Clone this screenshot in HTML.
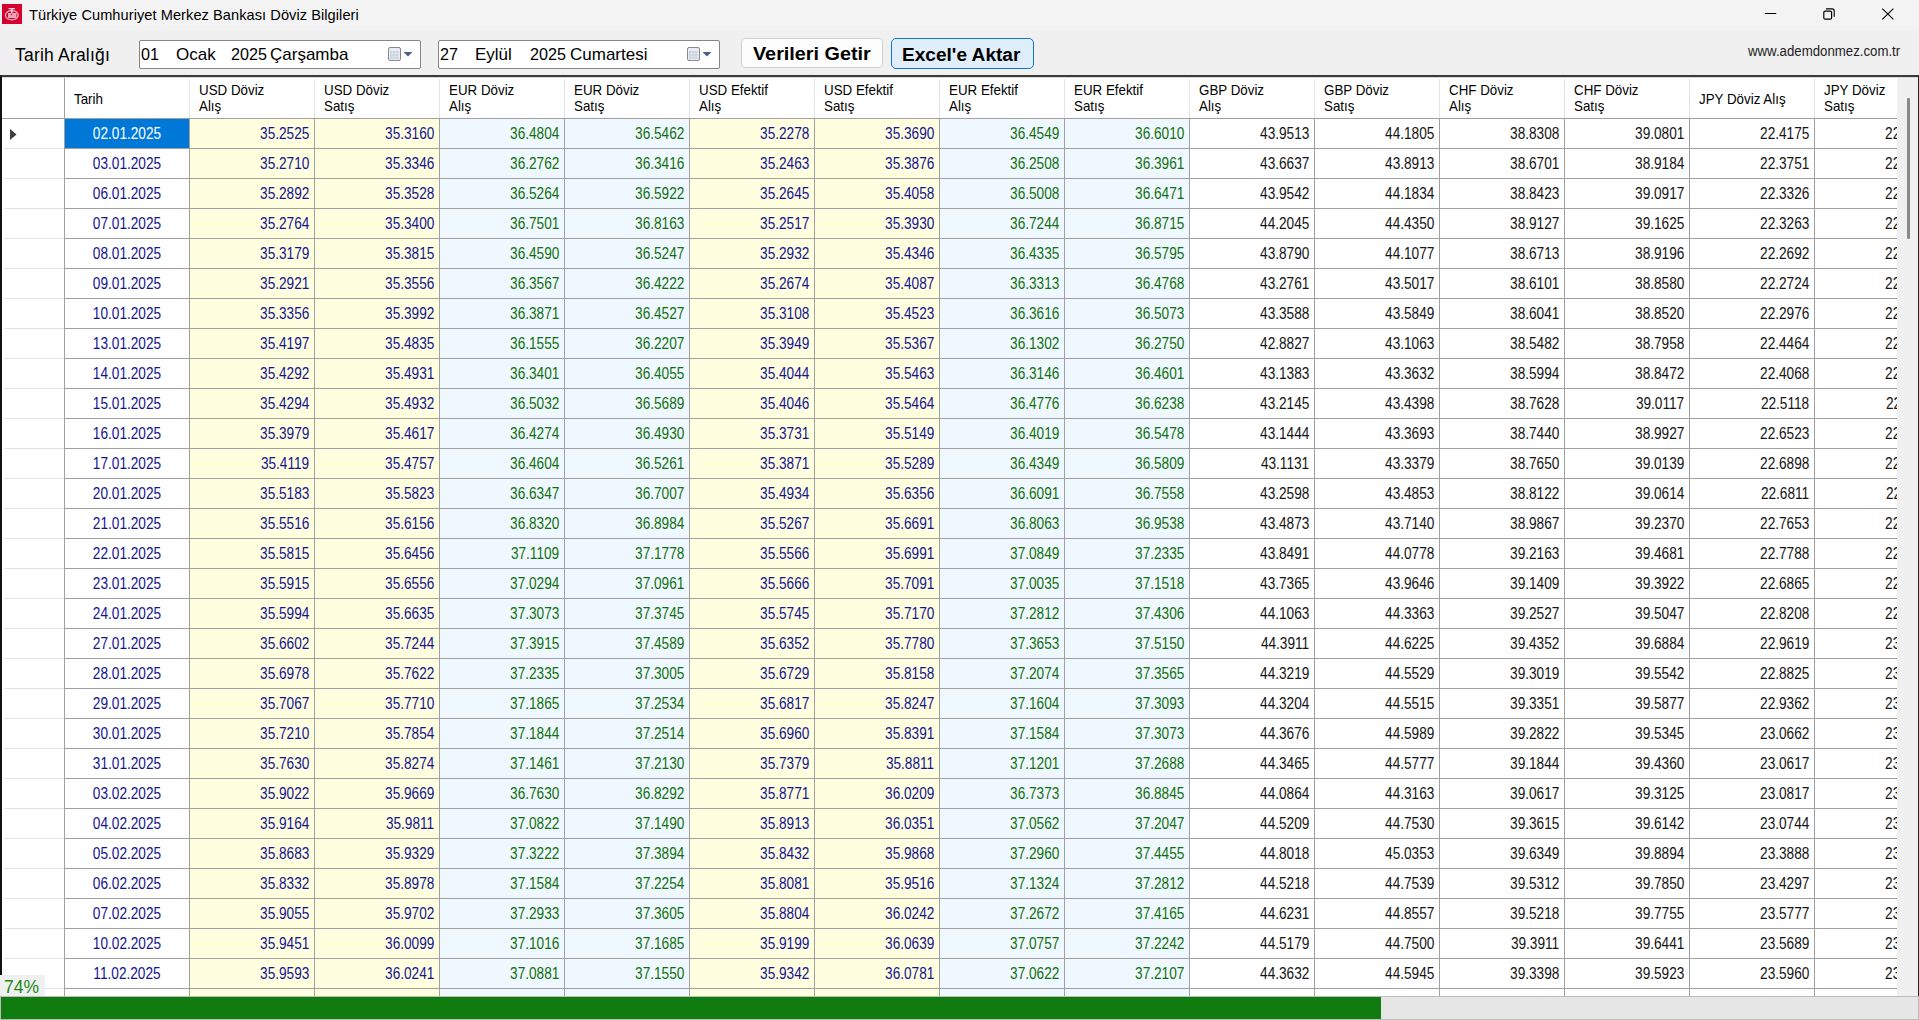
<!DOCTYPE html><html><head><meta charset="utf-8"><title>Doviz</title><style>
*{box-sizing:border-box}
html,body{margin:0;padding:0}
body{width:1919px;height:1020px;overflow:hidden;background:#F0F0F0;position:relative;font-family:"Liberation Sans",sans-serif;color:#000}
#title{position:absolute;left:0;top:0;width:1919px;height:30px;background:#F3F3F3}
#icon{position:absolute;left:2px;top:4px;width:20px;height:20px}
#icon svg{display:block}
#ttext{position:absolute;left:29px;top:6px;font-size:14.6px;line-height:18px;letter-spacing:0.06px;white-space:nowrap;color:#000}
#wctl{position:absolute;left:1750px;top:0}
#lbl{position:absolute;left:15px;top:44.5px;font-size:17.5px;line-height:20px;letter-spacing:0.2px;white-space:nowrap;color:#000}
.dp{position:absolute;top:40px;width:282px;height:29px;background:#fff;border:1px solid #868686;border-radius:2px}
.dp span{position:absolute;top:4px;font-size:17px;line-height:20px;white-space:nowrap}
.dp .num{transform:scaleX(0.95);transform-origin:0 0}
.dp .cal{position:absolute;left:248px;top:6px}
.btn{position:absolute;top:38px;height:30px;border:1px solid #D0D0D0;border-radius:4px;background:#FDFDFD}
.btn span{position:absolute;top:5px;font-weight:bold;font-size:18px;line-height:20px;white-space:nowrap;transform-origin:0 0}
#b1{left:741px;width:142px}
#b1 span{left:11px;transform:scaleX(1.1)}
#b2{left:891px;width:143px;height:31px;border:1.5px solid #0A78D4;border-radius:5px;background:#E0EEF9}
#b2 span{left:9.5px;top:5.5px;transform:scaleX(1.06)}
#web{position:absolute;left:1748px;top:43px;font-size:14px;line-height:16px;white-space:nowrap;color:#222;transform:scaleX(0.945);transform-origin:0 0}
#grid{position:absolute;left:0;top:75px;width:1919px;height:921px;background:#fff;border-top:2px solid #3A3A3A;border-left:2px solid #111;border-right:1px solid #222;overflow:hidden}
#hdr{position:absolute;left:-2px;top:0;width:1919px;height:42px}
#hdr:before{content:"";position:absolute;left:0;top:0;width:100%;height:1px;background:#DADADA;z-index:2}
.rh0{position:absolute;left:2px;top:0;width:63px;height:42px;background:#fff;border-right:1px solid #A0A0A0;border-bottom:1px solid #A0A0A0}
.hc{position:absolute;top:0;width:125px;height:42px;background:#fff;border-bottom:1px solid #A0A0A0}
.hc:after{content:"";position:absolute;right:0;top:2px;bottom:0;width:1px;background:#E3E3E3}
.hc span{position:absolute;left:9px;font-size:15px;line-height:16px;white-space:nowrap;transform:scaleX(0.89);transform-origin:0 0}
.hc .h1{top:4.5px}
.hc .h2{top:21px}
.hc .h1c{top:13.5px}
.row{position:absolute;left:-2px;width:1919px;height:30px}
.rh{position:absolute;left:2px;top:0;width:63px;height:30px;border-right:1px solid #A0A0A0}
.rh:after{content:"";position:absolute;left:2px;right:0;bottom:0;height:1px;background:#E3E3E3}
.tri{position:absolute;left:0;top:0}
.c{position:absolute;top:0;width:125px;height:30px;border-right:1px solid #A0A0A0;border-bottom:1px solid #A0A0A0;overflow:hidden}
.c span{position:absolute;top:6px;font-size:15.6px;line-height:18px;white-space:nowrap}
.c.u{background:#FFFFE0;color:#14148F}
.c.e{background:#F0F8FF;color:#107010}
.c.w{background:#fff;color:#141414}
.c.d{background:#fff;color:#14148F}
.c.sel{background:#0078D7;color:#fff}
.c.u span,.c.e span,.c.w span{right:5px;transform:scaleX(0.875);transform-origin:100% 0}
.c.d span,.c.sel span{left:0;right:0;text-align:center;transform:scaleX(0.875);transform-origin:50% 0}
#vs{position:absolute;left:1895px;top:0;width:21px;height:921px;background:#F0F0F0;border-top:1px solid #fff}
#thumb{position:absolute;left:10px;top:20px;width:3px;height:141px;background:#8A8A8A;border-radius:1px}
#pct{position:absolute;left:0;top:975px;width:45px;height:21px;background:#F0F0F0;color:#1A8A1A;font-size:17.5px;line-height:20px;padding-left:4px;padding-top:2px;white-space:nowrap}
#pb{position:absolute;left:0;top:996px;width:1919px;height:24px;background:#E6E6E6;border:1px solid #BCBCBC}
#pbf{position:absolute;left:0;top:0;width:1380px;height:22px;background:#107C10}

</style></head><body>
<div id="title">
<div id="icon"><svg width="20" height="20" viewBox="0 0 20 20"><rect width="20" height="20" fill="#D4002D"/><ellipse cx="9.8" cy="11.2" rx="6.4" ry="4.6" fill="none" stroke="#F2B8C5" stroke-width="1.3"/><path d="M6.6 4.6h6.4M9.8 4.6v5" stroke="#F8DDE3" stroke-width="1.4"/><rect x="6" y="9" width="8.5" height="5" fill="#EFA6B7"/><circle cx="9.5" cy="10.5" r="0.8" fill="#D4002D"/></svg></div>
<div id="ttext">Türkiye Cumhuriyet Merkez Bankası Döviz Bilgileri</div>
<svg id="wctl" width="160" height="30" viewBox="0 0 160 30"><path d="M14.8 13.5h11.4" stroke="#000" stroke-width="1.05"/><path d="M76 8.9h6.2a2 2 0 0 1 2 2v5.8" fill="none" stroke="#000" stroke-width="1.1"/><rect x="73.8" y="11.1" width="7.8" height="8.1" rx="1.5" fill="none" stroke="#000" stroke-width="1.2"/><path d="M132.3 8.6l11.1 10.8M143.4 8.6l-11.1 10.8" stroke="#000" stroke-width="1.1"/></svg>
</div>
<div id="lbl">Tarih Aralığı</div>
<div class="dp" style="left:139px"><span style="left:1px" class="num">01</span><span style="left:36px">Ocak</span><span style="left:91px" class="num">2025</span><span style="left:130px">Çarşamba</span><svg class="cal" width="28" height="16" viewBox="0 0 28 16"><rect x="0.5" y="0.5" width="12" height="13" rx="1.5" fill="#E8EDF5" stroke="#8C8888" stroke-width="1"/><path d="M3 4v8M6 4v8M9 4v8M2 5h9M2 8h9M2 11h9" stroke="#C4CCD8" stroke-width="1"/><path d="M15.5 5h9l-4.5 4.5z" fill="#4E5F80"/></svg></div>
<div class="dp" style="left:438px"><span style="left:1px" class="num">27</span><span style="left:36px">Eylül</span><span style="left:91px" class="num">2025</span><span style="left:131px">Cumartesi</span><svg class="cal" width="28" height="16" viewBox="0 0 28 16"><rect x="0.5" y="0.5" width="12" height="13" rx="1.5" fill="#E8EDF5" stroke="#8C8888" stroke-width="1"/><path d="M3 4v8M6 4v8M9 4v8M2 5h9M2 8h9M2 11h9" stroke="#C4CCD8" stroke-width="1"/><path d="M15.5 5h9l-4.5 4.5z" fill="#4E5F80"/></svg></div>
<div class="btn" id="b1"><span>Verileri Getir</span></div>
<div class="btn" id="b2"><span>Excel'e Aktar</span></div>
<div id="web">www.ademdonmez.com.tr</div>
<div id="grid">
<div id="hdr">
<div class="rh0"></div>
<div class="hc" style="left:65px"><span class="h1c">Tarih</span></div>
<div class="hc" style="left:190px"><span class="h1">USD Döviz</span><span class="h2">Alış</span></div>
<div class="hc" style="left:315px"><span class="h1">USD Döviz</span><span class="h2">Satış</span></div>
<div class="hc" style="left:440px"><span class="h1">EUR Döviz</span><span class="h2">Alış</span></div>
<div class="hc" style="left:565px"><span class="h1">EUR Döviz</span><span class="h2">Satış</span></div>
<div class="hc" style="left:690px"><span class="h1">USD Efektif</span><span class="h2">Alış</span></div>
<div class="hc" style="left:815px"><span class="h1">USD Efektif</span><span class="h2">Satış</span></div>
<div class="hc" style="left:940px"><span class="h1">EUR Efektif</span><span class="h2">Alış</span></div>
<div class="hc" style="left:1065px"><span class="h1">EUR Efektif</span><span class="h2">Satış</span></div>
<div class="hc" style="left:1190px"><span class="h1">GBP Döviz</span><span class="h2">Alış</span></div>
<div class="hc" style="left:1315px"><span class="h1">GBP Döviz</span><span class="h2">Satış</span></div>
<div class="hc" style="left:1440px"><span class="h1">CHF Döviz</span><span class="h2">Alış</span></div>
<div class="hc" style="left:1565px"><span class="h1">CHF Döviz</span><span class="h2">Satış</span></div>
<div class="hc" style="left:1690px"><span class="h1c">JPY Döviz Alış</span></div>
<div class="hc" style="left:1815px"><span class="h1">JPY Döviz</span><span class="h2">Satış</span></div>
</div>
<div class="row" style="top:42px">
<div class="rh"><svg class="tri" width="20" height="30"><path d="M8 10L14.6 15.5L8 21Z" fill="#404040"/></svg></div>
<div class="c sel" style="left:65px"><span>02.01.2025</span></div>
<div class="c u" style="left:190px"><span>35.2525</span></div>
<div class="c u" style="left:315px"><span>35.3160</span></div>
<div class="c e" style="left:440px"><span>36.4804</span></div>
<div class="c e" style="left:565px"><span>36.5462</span></div>
<div class="c u" style="left:690px"><span>35.2278</span></div>
<div class="c u" style="left:815px"><span>35.3690</span></div>
<div class="c e" style="left:940px"><span>36.4549</span></div>
<div class="c e" style="left:1065px"><span>36.6010</span></div>
<div class="c w" style="left:1190px"><span>43.9513</span></div>
<div class="c w" style="left:1315px"><span>44.1805</span></div>
<div class="c w" style="left:1440px"><span>38.8308</span></div>
<div class="c w" style="left:1565px"><span>39.0801</span></div>
<div class="c w" style="left:1690px"><span>22.4175</span></div>
<div class="c w" style="left:1815px"><span>22.5175</span></div>
</div>
<div class="row" style="top:72px">
<div class="rh"></div>
<div class="c d" style="left:65px"><span>03.01.2025</span></div>
<div class="c u" style="left:190px"><span>35.2710</span></div>
<div class="c u" style="left:315px"><span>35.3346</span></div>
<div class="c e" style="left:440px"><span>36.2762</span></div>
<div class="c e" style="left:565px"><span>36.3416</span></div>
<div class="c u" style="left:690px"><span>35.2463</span></div>
<div class="c u" style="left:815px"><span>35.3876</span></div>
<div class="c e" style="left:940px"><span>36.2508</span></div>
<div class="c e" style="left:1065px"><span>36.3961</span></div>
<div class="c w" style="left:1190px"><span>43.6637</span></div>
<div class="c w" style="left:1315px"><span>43.8913</span></div>
<div class="c w" style="left:1440px"><span>38.6701</span></div>
<div class="c w" style="left:1565px"><span>38.9184</span></div>
<div class="c w" style="left:1690px"><span>22.3751</span></div>
<div class="c w" style="left:1815px"><span>22.5751</span></div>
</div>
<div class="row" style="top:102px">
<div class="rh"></div>
<div class="c d" style="left:65px"><span>06.01.2025</span></div>
<div class="c u" style="left:190px"><span>35.2892</span></div>
<div class="c u" style="left:315px"><span>35.3528</span></div>
<div class="c e" style="left:440px"><span>36.5264</span></div>
<div class="c e" style="left:565px"><span>36.5922</span></div>
<div class="c u" style="left:690px"><span>35.2645</span></div>
<div class="c u" style="left:815px"><span>35.4058</span></div>
<div class="c e" style="left:940px"><span>36.5008</span></div>
<div class="c e" style="left:1065px"><span>36.6471</span></div>
<div class="c w" style="left:1190px"><span>43.9542</span></div>
<div class="c w" style="left:1315px"><span>44.1834</span></div>
<div class="c w" style="left:1440px"><span>38.8423</span></div>
<div class="c w" style="left:1565px"><span>39.0917</span></div>
<div class="c w" style="left:1690px"><span>22.3326</span></div>
<div class="c w" style="left:1815px"><span>22.5326</span></div>
</div>
<div class="row" style="top:132px">
<div class="rh"></div>
<div class="c d" style="left:65px"><span>07.01.2025</span></div>
<div class="c u" style="left:190px"><span>35.2764</span></div>
<div class="c u" style="left:315px"><span>35.3400</span></div>
<div class="c e" style="left:440px"><span>36.7501</span></div>
<div class="c e" style="left:565px"><span>36.8163</span></div>
<div class="c u" style="left:690px"><span>35.2517</span></div>
<div class="c u" style="left:815px"><span>35.3930</span></div>
<div class="c e" style="left:940px"><span>36.7244</span></div>
<div class="c e" style="left:1065px"><span>36.8715</span></div>
<div class="c w" style="left:1190px"><span>44.2045</span></div>
<div class="c w" style="left:1315px"><span>44.4350</span></div>
<div class="c w" style="left:1440px"><span>38.9127</span></div>
<div class="c w" style="left:1565px"><span>39.1625</span></div>
<div class="c w" style="left:1690px"><span>22.3263</span></div>
<div class="c w" style="left:1815px"><span>22.5263</span></div>
</div>
<div class="row" style="top:162px">
<div class="rh"></div>
<div class="c d" style="left:65px"><span>08.01.2025</span></div>
<div class="c u" style="left:190px"><span>35.3179</span></div>
<div class="c u" style="left:315px"><span>35.3815</span></div>
<div class="c e" style="left:440px"><span>36.4590</span></div>
<div class="c e" style="left:565px"><span>36.5247</span></div>
<div class="c u" style="left:690px"><span>35.2932</span></div>
<div class="c u" style="left:815px"><span>35.4346</span></div>
<div class="c e" style="left:940px"><span>36.4335</span></div>
<div class="c e" style="left:1065px"><span>36.5795</span></div>
<div class="c w" style="left:1190px"><span>43.8790</span></div>
<div class="c w" style="left:1315px"><span>44.1077</span></div>
<div class="c w" style="left:1440px"><span>38.6713</span></div>
<div class="c w" style="left:1565px"><span>38.9196</span></div>
<div class="c w" style="left:1690px"><span>22.2692</span></div>
<div class="c w" style="left:1815px"><span>22.5692</span></div>
</div>
<div class="row" style="top:192px">
<div class="rh"></div>
<div class="c d" style="left:65px"><span>09.01.2025</span></div>
<div class="c u" style="left:190px"><span>35.2921</span></div>
<div class="c u" style="left:315px"><span>35.3556</span></div>
<div class="c e" style="left:440px"><span>36.3567</span></div>
<div class="c e" style="left:565px"><span>36.4222</span></div>
<div class="c u" style="left:690px"><span>35.2674</span></div>
<div class="c u" style="left:815px"><span>35.4087</span></div>
<div class="c e" style="left:940px"><span>36.3313</span></div>
<div class="c e" style="left:1065px"><span>36.4768</span></div>
<div class="c w" style="left:1190px"><span>43.2761</span></div>
<div class="c w" style="left:1315px"><span>43.5017</span></div>
<div class="c w" style="left:1440px"><span>38.6101</span></div>
<div class="c w" style="left:1565px"><span>38.8580</span></div>
<div class="c w" style="left:1690px"><span>22.2724</span></div>
<div class="c w" style="left:1815px"><span>22.5724</span></div>
</div>
<div class="row" style="top:222px">
<div class="rh"></div>
<div class="c d" style="left:65px"><span>10.01.2025</span></div>
<div class="c u" style="left:190px"><span>35.3356</span></div>
<div class="c u" style="left:315px"><span>35.3992</span></div>
<div class="c e" style="left:440px"><span>36.3871</span></div>
<div class="c e" style="left:565px"><span>36.4527</span></div>
<div class="c u" style="left:690px"><span>35.3108</span></div>
<div class="c u" style="left:815px"><span>35.4523</span></div>
<div class="c e" style="left:940px"><span>36.3616</span></div>
<div class="c e" style="left:1065px"><span>36.5073</span></div>
<div class="c w" style="left:1190px"><span>43.3588</span></div>
<div class="c w" style="left:1315px"><span>43.5849</span></div>
<div class="c w" style="left:1440px"><span>38.6041</span></div>
<div class="c w" style="left:1565px"><span>38.8520</span></div>
<div class="c w" style="left:1690px"><span>22.2976</span></div>
<div class="c w" style="left:1815px"><span>22.5976</span></div>
</div>
<div class="row" style="top:252px">
<div class="rh"></div>
<div class="c d" style="left:65px"><span>13.01.2025</span></div>
<div class="c u" style="left:190px"><span>35.4197</span></div>
<div class="c u" style="left:315px"><span>35.4835</span></div>
<div class="c e" style="left:440px"><span>36.1555</span></div>
<div class="c e" style="left:565px"><span>36.2207</span></div>
<div class="c u" style="left:690px"><span>35.3949</span></div>
<div class="c u" style="left:815px"><span>35.5367</span></div>
<div class="c e" style="left:940px"><span>36.1302</span></div>
<div class="c e" style="left:1065px"><span>36.2750</span></div>
<div class="c w" style="left:1190px"><span>42.8827</span></div>
<div class="c w" style="left:1315px"><span>43.1063</span></div>
<div class="c w" style="left:1440px"><span>38.5482</span></div>
<div class="c w" style="left:1565px"><span>38.7958</span></div>
<div class="c w" style="left:1690px"><span>22.4464</span></div>
<div class="c w" style="left:1815px"><span>22.5464</span></div>
</div>
<div class="row" style="top:282px">
<div class="rh"></div>
<div class="c d" style="left:65px"><span>14.01.2025</span></div>
<div class="c u" style="left:190px"><span>35.4292</span></div>
<div class="c u" style="left:315px"><span>35.4931</span></div>
<div class="c e" style="left:440px"><span>36.3401</span></div>
<div class="c e" style="left:565px"><span>36.4055</span></div>
<div class="c u" style="left:690px"><span>35.4044</span></div>
<div class="c u" style="left:815px"><span>35.5463</span></div>
<div class="c e" style="left:940px"><span>36.3146</span></div>
<div class="c e" style="left:1065px"><span>36.4601</span></div>
<div class="c w" style="left:1190px"><span>43.1383</span></div>
<div class="c w" style="left:1315px"><span>43.3632</span></div>
<div class="c w" style="left:1440px"><span>38.5994</span></div>
<div class="c w" style="left:1565px"><span>38.8472</span></div>
<div class="c w" style="left:1690px"><span>22.4068</span></div>
<div class="c w" style="left:1815px"><span>22.5068</span></div>
</div>
<div class="row" style="top:312px">
<div class="rh"></div>
<div class="c d" style="left:65px"><span>15.01.2025</span></div>
<div class="c u" style="left:190px"><span>35.4294</span></div>
<div class="c u" style="left:315px"><span>35.4932</span></div>
<div class="c e" style="left:440px"><span>36.5032</span></div>
<div class="c e" style="left:565px"><span>36.5689</span></div>
<div class="c u" style="left:690px"><span>35.4046</span></div>
<div class="c u" style="left:815px"><span>35.5464</span></div>
<div class="c e" style="left:940px"><span>36.4776</span></div>
<div class="c e" style="left:1065px"><span>36.6238</span></div>
<div class="c w" style="left:1190px"><span>43.2145</span></div>
<div class="c w" style="left:1315px"><span>43.4398</span></div>
<div class="c w" style="left:1440px"><span>38.7628</span></div>
<div class="c w" style="left:1565px"><span>39.0117</span></div>
<div class="c w" style="left:1690px"><span>22.5118</span></div>
<div class="c w" style="left:1815px"><span>22.5118</span></div>
</div>
<div class="row" style="top:342px">
<div class="rh"></div>
<div class="c d" style="left:65px"><span>16.01.2025</span></div>
<div class="c u" style="left:190px"><span>35.3979</span></div>
<div class="c u" style="left:315px"><span>35.4617</span></div>
<div class="c e" style="left:440px"><span>36.4274</span></div>
<div class="c e" style="left:565px"><span>36.4930</span></div>
<div class="c u" style="left:690px"><span>35.3731</span></div>
<div class="c u" style="left:815px"><span>35.5149</span></div>
<div class="c e" style="left:940px"><span>36.4019</span></div>
<div class="c e" style="left:1065px"><span>36.5478</span></div>
<div class="c w" style="left:1190px"><span>43.1444</span></div>
<div class="c w" style="left:1315px"><span>43.3693</span></div>
<div class="c w" style="left:1440px"><span>38.7440</span></div>
<div class="c w" style="left:1565px"><span>38.9927</span></div>
<div class="c w" style="left:1690px"><span>22.6523</span></div>
<div class="c w" style="left:1815px"><span>22.5523</span></div>
</div>
<div class="row" style="top:372px">
<div class="rh"></div>
<div class="c d" style="left:65px"><span>17.01.2025</span></div>
<div class="c u" style="left:190px"><span>35.4119</span></div>
<div class="c u" style="left:315px"><span>35.4757</span></div>
<div class="c e" style="left:440px"><span>36.4604</span></div>
<div class="c e" style="left:565px"><span>36.5261</span></div>
<div class="c u" style="left:690px"><span>35.3871</span></div>
<div class="c u" style="left:815px"><span>35.5289</span></div>
<div class="c e" style="left:940px"><span>36.4349</span></div>
<div class="c e" style="left:1065px"><span>36.5809</span></div>
<div class="c w" style="left:1190px"><span>43.1131</span></div>
<div class="c w" style="left:1315px"><span>43.3379</span></div>
<div class="c w" style="left:1440px"><span>38.7650</span></div>
<div class="c w" style="left:1565px"><span>39.0139</span></div>
<div class="c w" style="left:1690px"><span>22.6898</span></div>
<div class="c w" style="left:1815px"><span>22.5898</span></div>
</div>
<div class="row" style="top:402px">
<div class="rh"></div>
<div class="c d" style="left:65px"><span>20.01.2025</span></div>
<div class="c u" style="left:190px"><span>35.5183</span></div>
<div class="c u" style="left:315px"><span>35.5823</span></div>
<div class="c e" style="left:440px"><span>36.6347</span></div>
<div class="c e" style="left:565px"><span>36.7007</span></div>
<div class="c u" style="left:690px"><span>35.4934</span></div>
<div class="c u" style="left:815px"><span>35.6356</span></div>
<div class="c e" style="left:940px"><span>36.6091</span></div>
<div class="c e" style="left:1065px"><span>36.7558</span></div>
<div class="c w" style="left:1190px"><span>43.2598</span></div>
<div class="c w" style="left:1315px"><span>43.4853</span></div>
<div class="c w" style="left:1440px"><span>38.8122</span></div>
<div class="c w" style="left:1565px"><span>39.0614</span></div>
<div class="c w" style="left:1690px"><span>22.6811</span></div>
<div class="c w" style="left:1815px"><span>22.5811</span></div>
</div>
<div class="row" style="top:432px">
<div class="rh"></div>
<div class="c d" style="left:65px"><span>21.01.2025</span></div>
<div class="c u" style="left:190px"><span>35.5516</span></div>
<div class="c u" style="left:315px"><span>35.6156</span></div>
<div class="c e" style="left:440px"><span>36.8320</span></div>
<div class="c e" style="left:565px"><span>36.8984</span></div>
<div class="c u" style="left:690px"><span>35.5267</span></div>
<div class="c u" style="left:815px"><span>35.6691</span></div>
<div class="c e" style="left:940px"><span>36.8063</span></div>
<div class="c e" style="left:1065px"><span>36.9538</span></div>
<div class="c w" style="left:1190px"><span>43.4873</span></div>
<div class="c w" style="left:1315px"><span>43.7140</span></div>
<div class="c w" style="left:1440px"><span>38.9867</span></div>
<div class="c w" style="left:1565px"><span>39.2370</span></div>
<div class="c w" style="left:1690px"><span>22.7653</span></div>
<div class="c w" style="left:1815px"><span>22.5653</span></div>
</div>
<div class="row" style="top:462px">
<div class="rh"></div>
<div class="c d" style="left:65px"><span>22.01.2025</span></div>
<div class="c u" style="left:190px"><span>35.5815</span></div>
<div class="c u" style="left:315px"><span>35.6456</span></div>
<div class="c e" style="left:440px"><span>37.1109</span></div>
<div class="c e" style="left:565px"><span>37.1778</span></div>
<div class="c u" style="left:690px"><span>35.5566</span></div>
<div class="c u" style="left:815px"><span>35.6991</span></div>
<div class="c e" style="left:940px"><span>37.0849</span></div>
<div class="c e" style="left:1065px"><span>37.2335</span></div>
<div class="c w" style="left:1190px"><span>43.8491</span></div>
<div class="c w" style="left:1315px"><span>44.0778</span></div>
<div class="c w" style="left:1440px"><span>39.2163</span></div>
<div class="c w" style="left:1565px"><span>39.4681</span></div>
<div class="c w" style="left:1690px"><span>22.7788</span></div>
<div class="c w" style="left:1815px"><span>22.5788</span></div>
</div>
<div class="row" style="top:492px">
<div class="rh"></div>
<div class="c d" style="left:65px"><span>23.01.2025</span></div>
<div class="c u" style="left:190px"><span>35.5915</span></div>
<div class="c u" style="left:315px"><span>35.6556</span></div>
<div class="c e" style="left:440px"><span>37.0294</span></div>
<div class="c e" style="left:565px"><span>37.0961</span></div>
<div class="c u" style="left:690px"><span>35.5666</span></div>
<div class="c u" style="left:815px"><span>35.7091</span></div>
<div class="c e" style="left:940px"><span>37.0035</span></div>
<div class="c e" style="left:1065px"><span>37.1518</span></div>
<div class="c w" style="left:1190px"><span>43.7365</span></div>
<div class="c w" style="left:1315px"><span>43.9646</span></div>
<div class="c w" style="left:1440px"><span>39.1409</span></div>
<div class="c w" style="left:1565px"><span>39.3922</span></div>
<div class="c w" style="left:1690px"><span>22.6865</span></div>
<div class="c w" style="left:1815px"><span>22.5865</span></div>
</div>
<div class="row" style="top:522px">
<div class="rh"></div>
<div class="c d" style="left:65px"><span>24.01.2025</span></div>
<div class="c u" style="left:190px"><span>35.5994</span></div>
<div class="c u" style="left:315px"><span>35.6635</span></div>
<div class="c e" style="left:440px"><span>37.3073</span></div>
<div class="c e" style="left:565px"><span>37.3745</span></div>
<div class="c u" style="left:690px"><span>35.5745</span></div>
<div class="c u" style="left:815px"><span>35.7170</span></div>
<div class="c e" style="left:940px"><span>37.2812</span></div>
<div class="c e" style="left:1065px"><span>37.4306</span></div>
<div class="c w" style="left:1190px"><span>44.1063</span></div>
<div class="c w" style="left:1315px"><span>44.3363</span></div>
<div class="c w" style="left:1440px"><span>39.2527</span></div>
<div class="c w" style="left:1565px"><span>39.5047</span></div>
<div class="c w" style="left:1690px"><span>22.8208</span></div>
<div class="c w" style="left:1815px"><span>22.5208</span></div>
</div>
<div class="row" style="top:552px">
<div class="rh"></div>
<div class="c d" style="left:65px"><span>27.01.2025</span></div>
<div class="c u" style="left:190px"><span>35.6602</span></div>
<div class="c u" style="left:315px"><span>35.7244</span></div>
<div class="c e" style="left:440px"><span>37.3915</span></div>
<div class="c e" style="left:565px"><span>37.4589</span></div>
<div class="c u" style="left:690px"><span>35.6352</span></div>
<div class="c u" style="left:815px"><span>35.7780</span></div>
<div class="c e" style="left:940px"><span>37.3653</span></div>
<div class="c e" style="left:1065px"><span>37.5150</span></div>
<div class="c w" style="left:1190px"><span>44.3911</span></div>
<div class="c w" style="left:1315px"><span>44.6225</span></div>
<div class="c w" style="left:1440px"><span>39.4352</span></div>
<div class="c w" style="left:1565px"><span>39.6884</span></div>
<div class="c w" style="left:1690px"><span>22.9619</span></div>
<div class="c w" style="left:1815px"><span>23.5619</span></div>
</div>
<div class="row" style="top:582px">
<div class="rh"></div>
<div class="c d" style="left:65px"><span>28.01.2025</span></div>
<div class="c u" style="left:190px"><span>35.6978</span></div>
<div class="c u" style="left:315px"><span>35.7622</span></div>
<div class="c e" style="left:440px"><span>37.2335</span></div>
<div class="c e" style="left:565px"><span>37.3005</span></div>
<div class="c u" style="left:690px"><span>35.6729</span></div>
<div class="c u" style="left:815px"><span>35.8158</span></div>
<div class="c e" style="left:940px"><span>37.2074</span></div>
<div class="c e" style="left:1065px"><span>37.3565</span></div>
<div class="c w" style="left:1190px"><span>44.3219</span></div>
<div class="c w" style="left:1315px"><span>44.5529</span></div>
<div class="c w" style="left:1440px"><span>39.3019</span></div>
<div class="c w" style="left:1565px"><span>39.5542</span></div>
<div class="c w" style="left:1690px"><span>22.8825</span></div>
<div class="c w" style="left:1815px"><span>23.5825</span></div>
</div>
<div class="row" style="top:612px">
<div class="rh"></div>
<div class="c d" style="left:65px"><span>29.01.2025</span></div>
<div class="c u" style="left:190px"><span>35.7067</span></div>
<div class="c u" style="left:315px"><span>35.7710</span></div>
<div class="c e" style="left:440px"><span>37.1865</span></div>
<div class="c e" style="left:565px"><span>37.2534</span></div>
<div class="c u" style="left:690px"><span>35.6817</span></div>
<div class="c u" style="left:815px"><span>35.8247</span></div>
<div class="c e" style="left:940px"><span>37.1604</span></div>
<div class="c e" style="left:1065px"><span>37.3093</span></div>
<div class="c w" style="left:1190px"><span>44.3204</span></div>
<div class="c w" style="left:1315px"><span>44.5515</span></div>
<div class="c w" style="left:1440px"><span>39.3351</span></div>
<div class="c w" style="left:1565px"><span>39.5877</span></div>
<div class="c w" style="left:1690px"><span>22.9362</span></div>
<div class="c w" style="left:1815px"><span>23.5362</span></div>
</div>
<div class="row" style="top:642px">
<div class="rh"></div>
<div class="c d" style="left:65px"><span>30.01.2025</span></div>
<div class="c u" style="left:190px"><span>35.7210</span></div>
<div class="c u" style="left:315px"><span>35.7854</span></div>
<div class="c e" style="left:440px"><span>37.1844</span></div>
<div class="c e" style="left:565px"><span>37.2514</span></div>
<div class="c u" style="left:690px"><span>35.6960</span></div>
<div class="c u" style="left:815px"><span>35.8391</span></div>
<div class="c e" style="left:940px"><span>37.1584</span></div>
<div class="c e" style="left:1065px"><span>37.3073</span></div>
<div class="c w" style="left:1190px"><span>44.3676</span></div>
<div class="c w" style="left:1315px"><span>44.5989</span></div>
<div class="c w" style="left:1440px"><span>39.2822</span></div>
<div class="c w" style="left:1565px"><span>39.5345</span></div>
<div class="c w" style="left:1690px"><span>23.0662</span></div>
<div class="c w" style="left:1815px"><span>23.5662</span></div>
</div>
<div class="row" style="top:672px">
<div class="rh"></div>
<div class="c d" style="left:65px"><span>31.01.2025</span></div>
<div class="c u" style="left:190px"><span>35.7630</span></div>
<div class="c u" style="left:315px"><span>35.8274</span></div>
<div class="c e" style="left:440px"><span>37.1461</span></div>
<div class="c e" style="left:565px"><span>37.2130</span></div>
<div class="c u" style="left:690px"><span>35.7379</span></div>
<div class="c u" style="left:815px"><span>35.8811</span></div>
<div class="c e" style="left:940px"><span>37.1201</span></div>
<div class="c e" style="left:1065px"><span>37.2688</span></div>
<div class="c w" style="left:1190px"><span>44.3465</span></div>
<div class="c w" style="left:1315px"><span>44.5777</span></div>
<div class="c w" style="left:1440px"><span>39.1844</span></div>
<div class="c w" style="left:1565px"><span>39.4360</span></div>
<div class="c w" style="left:1690px"><span>23.0617</span></div>
<div class="c w" style="left:1815px"><span>23.5617</span></div>
</div>
<div class="row" style="top:702px">
<div class="rh"></div>
<div class="c d" style="left:65px"><span>03.02.2025</span></div>
<div class="c u" style="left:190px"><span>35.9022</span></div>
<div class="c u" style="left:315px"><span>35.9669</span></div>
<div class="c e" style="left:440px"><span>36.7630</span></div>
<div class="c e" style="left:565px"><span>36.8292</span></div>
<div class="c u" style="left:690px"><span>35.8771</span></div>
<div class="c u" style="left:815px"><span>36.0209</span></div>
<div class="c e" style="left:940px"><span>36.7373</span></div>
<div class="c e" style="left:1065px"><span>36.8845</span></div>
<div class="c w" style="left:1190px"><span>44.0864</span></div>
<div class="c w" style="left:1315px"><span>44.3163</span></div>
<div class="c w" style="left:1440px"><span>39.0617</span></div>
<div class="c w" style="left:1565px"><span>39.3125</span></div>
<div class="c w" style="left:1690px"><span>23.0817</span></div>
<div class="c w" style="left:1815px"><span>23.5817</span></div>
</div>
<div class="row" style="top:732px">
<div class="rh"></div>
<div class="c d" style="left:65px"><span>04.02.2025</span></div>
<div class="c u" style="left:190px"><span>35.9164</span></div>
<div class="c u" style="left:315px"><span>35.9811</span></div>
<div class="c e" style="left:440px"><span>37.0822</span></div>
<div class="c e" style="left:565px"><span>37.1490</span></div>
<div class="c u" style="left:690px"><span>35.8913</span></div>
<div class="c u" style="left:815px"><span>36.0351</span></div>
<div class="c e" style="left:940px"><span>37.0562</span></div>
<div class="c e" style="left:1065px"><span>37.2047</span></div>
<div class="c w" style="left:1190px"><span>44.5209</span></div>
<div class="c w" style="left:1315px"><span>44.7530</span></div>
<div class="c w" style="left:1440px"><span>39.3615</span></div>
<div class="c w" style="left:1565px"><span>39.6142</span></div>
<div class="c w" style="left:1690px"><span>23.0744</span></div>
<div class="c w" style="left:1815px"><span>23.5744</span></div>
</div>
<div class="row" style="top:762px">
<div class="rh"></div>
<div class="c d" style="left:65px"><span>05.02.2025</span></div>
<div class="c u" style="left:190px"><span>35.8683</span></div>
<div class="c u" style="left:315px"><span>35.9329</span></div>
<div class="c e" style="left:440px"><span>37.3222</span></div>
<div class="c e" style="left:565px"><span>37.3894</span></div>
<div class="c u" style="left:690px"><span>35.8432</span></div>
<div class="c u" style="left:815px"><span>35.9868</span></div>
<div class="c e" style="left:940px"><span>37.2960</span></div>
<div class="c e" style="left:1065px"><span>37.4455</span></div>
<div class="c w" style="left:1190px"><span>44.8018</span></div>
<div class="c w" style="left:1315px"><span>45.0353</span></div>
<div class="c w" style="left:1440px"><span>39.6349</span></div>
<div class="c w" style="left:1565px"><span>39.8894</span></div>
<div class="c w" style="left:1690px"><span>23.3888</span></div>
<div class="c w" style="left:1815px"><span>23.5888</span></div>
</div>
<div class="row" style="top:792px">
<div class="rh"></div>
<div class="c d" style="left:65px"><span>06.02.2025</span></div>
<div class="c u" style="left:190px"><span>35.8332</span></div>
<div class="c u" style="left:315px"><span>35.8978</span></div>
<div class="c e" style="left:440px"><span>37.1584</span></div>
<div class="c e" style="left:565px"><span>37.2254</span></div>
<div class="c u" style="left:690px"><span>35.8081</span></div>
<div class="c u" style="left:815px"><span>35.9516</span></div>
<div class="c e" style="left:940px"><span>37.1324</span></div>
<div class="c e" style="left:1065px"><span>37.2812</span></div>
<div class="c w" style="left:1190px"><span>44.5218</span></div>
<div class="c w" style="left:1315px"><span>44.7539</span></div>
<div class="c w" style="left:1440px"><span>39.5312</span></div>
<div class="c w" style="left:1565px"><span>39.7850</span></div>
<div class="c w" style="left:1690px"><span>23.4297</span></div>
<div class="c w" style="left:1815px"><span>23.5297</span></div>
</div>
<div class="row" style="top:822px">
<div class="rh"></div>
<div class="c d" style="left:65px"><span>07.02.2025</span></div>
<div class="c u" style="left:190px"><span>35.9055</span></div>
<div class="c u" style="left:315px"><span>35.9702</span></div>
<div class="c e" style="left:440px"><span>37.2933</span></div>
<div class="c e" style="left:565px"><span>37.3605</span></div>
<div class="c u" style="left:690px"><span>35.8804</span></div>
<div class="c u" style="left:815px"><span>36.0242</span></div>
<div class="c e" style="left:940px"><span>37.2672</span></div>
<div class="c e" style="left:1065px"><span>37.4165</span></div>
<div class="c w" style="left:1190px"><span>44.6231</span></div>
<div class="c w" style="left:1315px"><span>44.8557</span></div>
<div class="c w" style="left:1440px"><span>39.5218</span></div>
<div class="c w" style="left:1565px"><span>39.7755</span></div>
<div class="c w" style="left:1690px"><span>23.5777</span></div>
<div class="c w" style="left:1815px"><span>23.5777</span></div>
</div>
<div class="row" style="top:852px">
<div class="rh"></div>
<div class="c d" style="left:65px"><span>10.02.2025</span></div>
<div class="c u" style="left:190px"><span>35.9451</span></div>
<div class="c u" style="left:315px"><span>36.0099</span></div>
<div class="c e" style="left:440px"><span>37.1016</span></div>
<div class="c e" style="left:565px"><span>37.1685</span></div>
<div class="c u" style="left:690px"><span>35.9199</span></div>
<div class="c u" style="left:815px"><span>36.0639</span></div>
<div class="c e" style="left:940px"><span>37.0757</span></div>
<div class="c e" style="left:1065px"><span>37.2242</span></div>
<div class="c w" style="left:1190px"><span>44.5179</span></div>
<div class="c w" style="left:1315px"><span>44.7500</span></div>
<div class="c w" style="left:1440px"><span>39.3911</span></div>
<div class="c w" style="left:1565px"><span>39.6441</span></div>
<div class="c w" style="left:1690px"><span>23.5689</span></div>
<div class="c w" style="left:1815px"><span>23.5689</span></div>
</div>
<div class="row" style="top:882px">
<div class="rh"></div>
<div class="c d" style="left:65px"><span>11.02.2025</span></div>
<div class="c u" style="left:190px"><span>35.9593</span></div>
<div class="c u" style="left:315px"><span>36.0241</span></div>
<div class="c e" style="left:440px"><span>37.0881</span></div>
<div class="c e" style="left:565px"><span>37.1550</span></div>
<div class="c u" style="left:690px"><span>35.9342</span></div>
<div class="c u" style="left:815px"><span>36.0781</span></div>
<div class="c e" style="left:940px"><span>37.0622</span></div>
<div class="c e" style="left:1065px"><span>37.2107</span></div>
<div class="c w" style="left:1190px"><span>44.3632</span></div>
<div class="c w" style="left:1315px"><span>44.5945</span></div>
<div class="c w" style="left:1440px"><span>39.3398</span></div>
<div class="c w" style="left:1565px"><span>39.5923</span></div>
<div class="c w" style="left:1690px"><span>23.5960</span></div>
<div class="c w" style="left:1815px"><span>23.5960</span></div>
</div>
<div class="row" style="top:912px">
<div class="rh"></div>
<div class="c d" style="left:65px"><span></span></div>
<div class="c u" style="left:190px"><span></span></div>
<div class="c u" style="left:315px"><span></span></div>
<div class="c e" style="left:440px"><span></span></div>
<div class="c e" style="left:565px"><span></span></div>
<div class="c u" style="left:690px"><span></span></div>
<div class="c u" style="left:815px"><span></span></div>
<div class="c e" style="left:940px"><span></span></div>
<div class="c e" style="left:1065px"><span></span></div>
<div class="c w" style="left:1190px"><span></span></div>
<div class="c w" style="left:1315px"><span></span></div>
<div class="c w" style="left:1440px"><span></span></div>
<div class="c w" style="left:1565px"><span></span></div>
<div class="c w" style="left:1690px"><span></span></div>
<div class="c w" style="left:1815px"><span></span></div>
</div>
<div id="vs"><div id="thumb"></div></div>
</div>
<div id="pct">74%</div>
<div id="pb"><div id="pbf"></div></div>
</body></html>
